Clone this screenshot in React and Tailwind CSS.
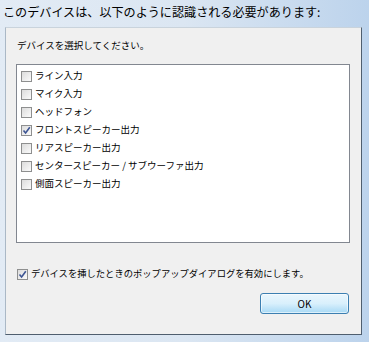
const devices = [
  { label: "ライン入力", checked: false },
  { label: "マイク入力", checked: false },
  { label: "ヘッドフォン", checked: false },
  { label: "フロントスピーカー出力", checked: true },
  { label: "リアスピーカー出力", checked: false },
  { label: "センタースピーカー / サブウーファ出力", checked: false },
  { label: "側面スピーカー出力", checked: false },
];

const CheckBox = ({ checked }) => (
  <span className="w-[11px] h-[11px] shrink-0 border border-[#8e8f8f] bg-[#f4f4f4] flex items-center justify-center">
    <span className="w-[9px] h-[9px] bg-gradient-to-br from-[#dcdcdc] to-[#fbfbfb] flex items-center justify-center">
      {checked && (
        <svg width="9" height="9" viewBox="0 0 9 9">
          <path d="M1.5 4.5 L3.6 7 L7.8 1.2" fill="none" stroke="#3d5593" strokeWidth="1.6" />
        </svg>
      )}
    </span>
  </span>
);

export default function App() {
  return (
    <div
      className="w-[369px] h-[342px] overflow-hidden bg-gradient-to-r from-[#e2ebf5] via-[#dbe6f2] to-[#bcd3ec] flex flex-col"
      style={{ fontFamily: '"Noto Sans CJK JP", "Noto Sans", sans-serif' }}
    >
      <div className="h-[27px] pl-[3px] flex items-center text-[12.1px] text-black leading-none pb-[2px]">
        このデバイスは、以下のように認識される必要があります:
      </div>
      <div className="ml-[5px] w-[357px] h-[308px] bg-[#f0f0f0] border border-t-[#c9d3dc] border-l-[#aab8c6] border-r-[#4f5e6e] border-b-[#4f5e6e] flex flex-col">
        <div className="h-[36px] pl-[11px] flex items-center text-[9.5px] leading-none text-black">
          デバイスを選択してください。
        </div>
        <div className="ml-[10px] w-[334px] h-[179px] bg-white border border-[#828790] pt-[2px] pl-[4px]">
          {devices.map((d) => (
            <div key={d.label} className="h-[18px] flex items-center gap-[3px] text-[9.5px] leading-none text-black">
              <CheckBox checked={d.checked} />
              <span>{d.label}</span>
            </div>
          ))}
        </div>
        <div className="mt-[23px] ml-[11px] h-[16px] flex items-center gap-[3px] text-[9.3px] leading-none text-black">
          <CheckBox checked />
          <span>デバイスを挿したときのポップアップダイアログを有効にします。</span>
        </div>
        <div className="mt-[11px] flex justify-end pr-[12px]">
          <button className="w-[89px] h-[21px] rounded-[3px] border border-[#3c7fb1] bg-gradient-to-b from-[#eaf6fd] via-[#d9f0fc] to-[#a7d9f5] text-[10px] text-black leading-none shadow-[inset_0_0_0_1px_rgba(255,255,255,0.6)]">
            OK
          </button>
        </div>
      </div>
    </div>
  );
}
